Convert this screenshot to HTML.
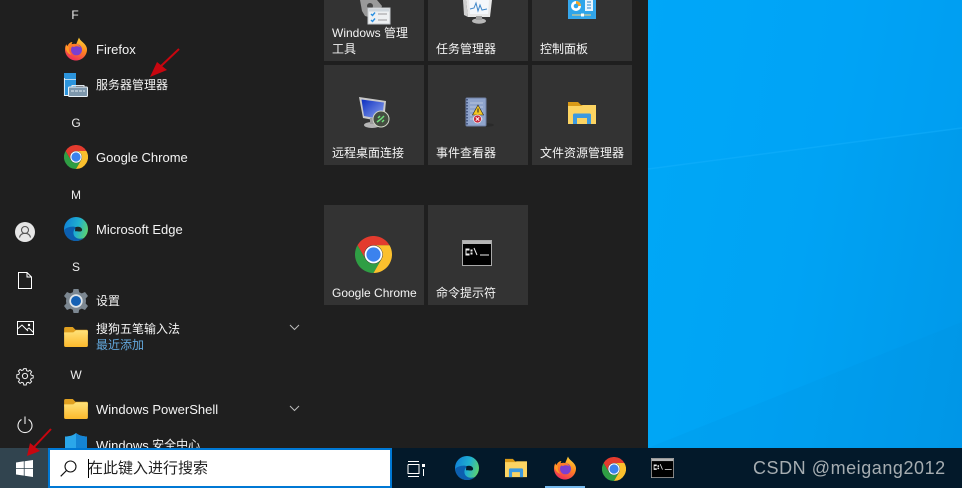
<!DOCTYPE html>
<html lang="zh-CN"><head><meta charset="utf-8"><title>Start</title>
<style>
html,body{margin:0;padding:0;background:#000}
#r{position:relative;width:962px;height:488px;overflow:hidden;background:#1f1f1f;font-family:"Liberation Sans","Noto Sans CJK SC",sans-serif;color:#f4f4f4}
.t{position:absolute;white-space:nowrap;font-size:12px;line-height:16px}
.t.e{font-size:13px}
.s{font-size:13px;position:relative;top:1px}
.l{position:absolute;width:20px;text-align:center;left:66px;font-size:12px;line-height:16px;color:#eee}
.tile{position:absolute;width:100px;height:100px;background:#333}
svg{position:absolute;overflow:visible}
#desk{position:absolute;left:648px;top:0;width:314px;height:448px;background:linear-gradient(100deg,#00a8f6 0%,#00a3f4 50%,#0098e9 100%)}
#tb{position:absolute;left:0;top:448px;width:962px;height:40px;background:#03192a}
</style></head><body><div id="r">
<svg width="0" height="0" style="position:absolute"><defs>
<linearGradient id="fo" x1="0.7" y1="0" x2="0.3" y2="1"><stop offset="0" stop-color="#ffd43a"/><stop offset=".45" stop-color="#ff8a1f"/><stop offset="1" stop-color="#f0285e"/></linearGradient>
<linearGradient id="eg" x1="0" y1="0.3" x2="1" y2="0.6"><stop offset="0" stop-color="#1083d8"/><stop offset=".55" stop-color="#20b0d0"/><stop offset="1" stop-color="#5ed36c"/></linearGradient>
<linearGradient id="fd" x1="0" y1="0" x2="0" y2="1"><stop offset="0" stop-color="#ffe27a"/><stop offset="1" stop-color="#fcb92c"/></linearGradient>
<linearGradient id="mon" x1="0" y1="0" x2="1" y2="1"><stop offset="0" stop-color="#0c2fc0"/><stop offset="1" stop-color="#93a8f0"/></linearGradient>
<symbol id="chrome" viewBox="0 0 48 48">
<path fill="#e33b2e" d="M3.2 12A24 24 0 0 1 44.8 12L24 12A12 12 0 0 0 13.6 30Z"/>
<path fill="#2f9e44" d="M3.2 12A24 24 0 0 0 24 48L34.4 30A12 12 0 0 1 13.6 30Z"/>
<path fill="#fbc02d" d="M44.8 12A24 24 0 0 1 24 48L34.4 30A12 12 0 0 0 24 12Z"/>
<circle cx="24" cy="24" r="11.5" fill="#fff"/><circle cx="24" cy="24" r="9.2" fill="#3b82ee"/></symbol>
<symbol id="firefox" viewBox="0 0 24 24">
<path fill="url(#fo)" d="M15 .5c.6 2 2 3 3.500 4.500 3 2.500 4.500 5 4.500 7.500 0 6-5 11-11 11S1 18.500 1 12.500c0-2 .5-4 1.300-5.300.3 1 .8 1.500 1.200 1.800C4.500 6.500 6.500 5 8.500 5c-.6 1-1 1.700-.8 2.500 1.500-.7 3-.7 4.500-.3C13 5 14 3 15 .5z"/>
<path fill="#ff9a24" d="M1.500 9c1 0 2.500.2 3.500 1.500-.5 2 0 5 2.500 7-3 0-6-3.500-6-8.500z"/>
<circle cx="12.500" cy="12.800" r="5.500" fill="#7b3fd0"/>
<path fill="#ff7a2a" d="M5 8.500c2-1.500 4.500-2 7-1.500 2.500.5 4 2 4.500 3.500-2-1.500-4.500-1.500-6.500-.5C8 9.500 6.500 9 5 8.500z"/></symbol>
<symbol id="edge" viewBox="0 0 24 24">
<circle cx="12" cy="12" r="12" fill="url(#eg)"/>
<path fill="#0c5fb0" d="M.3 13c.3 6 5 11 11.700 11 3 0 5.500-1 7.500-3-4 1.500-8 .5-9.500-2.500C8.500 15 10 11.500 13 10.500c-5-2-11 0-12.700 2.500z"/>
<path fill="#1f1f1f" d="M11.500 10.200c2-.8 5.500-.5 6.500 2 .5 1.300-.5 2.300-2 2.300-2 0-3.500-.5-5-.2.300-1.500 0-3 .5-4.100z" opacity=".95"/></symbol>
<symbol id="edget" viewBox="0 0 24 24">
<circle cx="12" cy="12" r="12" fill="url(#eg)"/>
<path fill="#0c5fb0" d="M.3 13c.3 6 5 11 11.700 11 3 0 5.500-1 7.500-3-4 1.500-8 .5-9.500-2.500C8.500 15 10 11.500 13 10.500c-5-2-11 0-12.700 2.500z"/>
<path fill="#03192a" d="M11.500 10.200c2-.8 5.500-.5 6.500 2 .5 1.300-.5 2.300-2 2.300-2 0-3.500-.5-5-.2.300-1.500 0-3 .5-4.100z"/></symbol>
<symbol id="folder" viewBox="1 1 22 18.500">
<path fill="#e0a020" d="M1 2.500Q1 1 2.500 1H9l2.500 2.500H22Q23 3.500 23 5V8H1Z"/>
<path fill="url(#fd)" d="M1 6H9.500L12 4H22Q23 4 23 5.500V18Q23 19.500 21.500 19.500H2.500Q1 19.500 1 18Z"/></symbol>
<symbol id="explorer" viewBox="0 0 28 24">
<path fill="#d99a17" d="M0 1H10L13 4H28V8H0Z"/><path fill="#fcd462" d="M0 5H13L15 4H28V23H0Z"/>
<path fill="#3c9ae0" d="M5 23V14Q5 12.500 6.500 12.500H21.500Q23 12.500 23 14V23H19V17H9V23Z"/></symbol>
<symbol id="cmd" viewBox="0 0 30 26">
<rect x=".5" y=".5" width="29" height="25" fill="#000" stroke="#a9a9a9"/><rect x="1" y="1" width="28" height="3" fill="#b5b5b5"/>
<path d="M4 9h3v1H4v4h3v1H4zM9 10h1v1H9zM9 13h1v1H9zM12 8l3 7M18 15h9" stroke="#eee" stroke-width="1" fill="none"/></symbol>
</defs></svg>

<div id="desk">
<svg style="left:0;top:0" width="314" height="448" viewBox="0 0 314 448">
<path fill="#00a7fb" d="M0 0H314V128L0 169Z" opacity=".3"/>
<path d="M0 169L314 128" stroke="#18b4ff" stroke-opacity=".4" stroke-width="1.500"/>
<path fill="#0090e0" d="M0 448L314 322V448Z" opacity=".18"/>
</svg></div>

<div class="tile" style="left:324px;top:-39px"></div>
<div class="tile" style="left:428px;top:-39px"></div>
<div class="tile" style="left:532px;top:-39px"></div>
<div class="tile" style="left:324px;top:65px"></div>
<div class="tile" style="left:428px;top:65px"></div>
<div class="tile" style="left:532px;top:65px"></div>
<div class="tile" style="left:324px;top:205px"></div>
<div class="tile" style="left:428px;top:205px"></div>

<!-- tile icons -->
<svg style="left:358px;top:0" width="34" height="26" viewBox="0 0 34 26">
<path fill="#9a9a9a" d="M2 0H19L24 6 22 12 14 18 7 16 4 11Z"/><circle cx="12" cy="6" r="3" fill="#444"/>
<rect x="10" y="8" width="22" height="16" fill="#eef0f2" stroke="#c4c8cc"/><rect x="11" y="9" width="20" height="2.500" fill="#cfd6dc"/>
<path d="M13 14l1.500 1.500 2.500-3M13 20l1.500 1.500 2.500-3" stroke="#2a8fe0" stroke-width="1.400" fill="none"/><path d="M20 14h9M20 20h9" stroke="#999"/></svg>
<svg style="left:462px;top:0" width="32" height="24" viewBox="0 0 32 24">
<path fill="#cfcfcf" d="M1 0H4L6 17 2 15Z"/><path fill="#e8e8e8" d="M4 0H30L28 17H6Z"/><path fill="#f4f7fb" d="M7 0H27L26 14H8Z"/>
<path d="M8 9l4-1 2-5 2 8 2-6 2 5 5-1" stroke="#3f86c8" stroke-width="1" fill="none"/>
<ellipse cx="17" cy="21" rx="7" ry="2.700" fill="#b8b8b8"/><rect x="14" y="16" width="6" height="4" fill="#a0a0a0"/></svg>
<svg style="left:568px;top:0" width="28" height="19" viewBox="0 0 28 19">
<rect width="28" height="19" fill="#37a7ec"/><rect x="1.500" y="0" width="25" height="17.500" fill="#2fa5ea"/>
<circle cx="8" cy="6" r="5" fill="#fff"/><path d="M8 6V1A5 5 0 0 1 13 6Z" fill="#f5a623"/><circle cx="8" cy="6" r="2.300" fill="#2fa5ea"/>
<rect x="17" y="0" width="8" height="11" fill="#e8f5ff"/><path d="M19 2h4M19 5h4M19 8h4" stroke="#2a85c8"/><path d="M4 15H23" stroke="#ffd27a"/><rect x="13" y="13.500" width="3" height="3" fill="#fff"/></svg>

<svg style="left:358px;top:97px" width="34" height="32" viewBox="0 0 34 32">
<path fill="#c9c9c9" d="M1 0L28 4 26 25 5 21Z"/><path fill="url(#mon)" d="M3.500 2.500L26 5.500 24 22.500 6 19Z"/>
<ellipse cx="14" cy="28" rx="8" ry="3" fill="#b5b5b5"/><rect x="12" y="21" width="6" height="6" fill="#9c9c9c"/>
<circle cx="23" cy="22" r="8" fill="#444d40" stroke="#cfd4c6"/><path d="M19 25l4-3M26 19l-3 3M20 21l2-2M24 25l2-2" stroke="#6ee27a" stroke-width="1.500"/></svg>
<svg style="left:465px;top:98px" width="30" height="30" viewBox="0 0 30 30">
<ellipse cx="18" cy="27" rx="11" ry="2" fill="#2a2a2a"/>
<rect x="1" y="0" width="20" height="28" rx="1" fill="#8fa4cc" stroke="#6f7fa3"/><path d="M2 1v26" stroke="#4a5d88" stroke-width="2" stroke-dasharray="1.500 1.500"/>
<path d="M5 5h13M5 9h13M5 13h13M5 17h13M5 21h13" stroke="#b9c6de"/>
<path d="M13 7L18.500 17H7.500Z" fill="#f4c721" stroke="#222" stroke-width=".6"/><rect x="12.500" y="10.500" width="1" height="4" fill="#222"/>
<circle cx="12.500" cy="21" r="4" fill="#c8283c" stroke="#eee" stroke-width=".7"/><path d="M10.800 19.300l3.400 3.400M14.200 19.300l-3.400 3.400" stroke="#fff"/></svg>
<svg style="left:568px;top:101px" width="28" height="24"><use href="#explorer" width="28" height="24"/></svg>

<svg style="left:355px;top:236px" width="37" height="37"><use href="#chrome" width="37" height="37"/></svg>
<svg style="left:462px;top:240px" width="30" height="26"><use href="#cmd" width="30" height="26"/></svg>

<div class="t" style="left:332px;top:25px">Windows 管理</div>
<div class="t" style="left:332px;top:41px">工具</div>
<div class="t" style="left:436px;top:41px">任务管理器</div>
<div class="t" style="left:540px;top:41px">控制面板</div>
<div class="t" style="left:332px;top:145px">远程桌面连接</div>
<div class="t" style="left:436px;top:145px">事件查看器</div>
<div class="t" style="left:540px;top:145px">文件资源管理器</div>
<div class="t" style="left:332px;top:285px">Google Chrome</div>
<div class="t" style="left:436px;top:285px">命令提示符</div>

<!-- list -->
<div class="l" style="top:7px;left:65px">F</div>
<div class="l" style="top:115px">G</div>
<div class="l" style="top:187px">M</div>
<div class="l" style="top:259px">S</div>
<div class="l" style="top:367px">W</div>

<svg style="left:64px;top:37px" width="24" height="24"><use href="#firefox" width="24" height="24"/></svg>
<svg style="left:64px;top:73px" width="24" height="24" viewBox="0 0 24 24">
<rect x="0" y="0" width="12" height="23" fill="#2c94dc"/><path d="M0 6.500H12" stroke="#dcecf8" stroke-width=".8"/><path d="M.4 5V22.500H5" stroke="#eef6fc" stroke-width=".9" fill="none"/>
<rect x="4.500" y="14" width="19" height="9.500" rx="1" fill="#7d97ac" stroke="#eaf2f8"/><path d="M8 14v-1.500h12V14" stroke="#dfe8ee" fill="none"/><path d="M7 18H21" stroke="#e4edf3" stroke-dasharray="3 1"/></svg>
<svg style="left:64px;top:145px" width="24" height="24"><use href="#chrome" width="24" height="24"/></svg>
<svg style="left:64px;top:217px" width="24" height="25"><use href="#edge" width="24" height="24"/></svg>
<svg style="left:64px;top:289px" width="24" height="24" viewBox="0 0 24 24">
<path fill="#7c8791" d="M9.500 0h5l.7 3.300 2.600 1.100L21 3l3 4-2.300 2.500.3 2.500-.3 2.500L24 17l-3 4-3.200-1.400-2.600 1.100-.7 3.300h-5l-.7-3.300-2.600-1.100L3 21l-3-4 2.300-2.500L2 12l.3-2.500L0 7l3-4 3.200 1.400 2.600-1.100z"/>
<circle cx="12" cy="12" r="6.700" fill="#dfe5ea"/><circle cx="12" cy="12" r="5" fill="#1460b4"/></svg>
<svg style="left:64px;top:327px" width="24" height="20"><use href="#folder" width="24" height="20"/></svg>
<svg style="left:64px;top:399px" width="24" height="20"><use href="#folder" width="24" height="20"/></svg>
<svg style="left:64px;top:432px" width="24" height="24" viewBox="0 0 24 24"><path fill="#2ba7ea" d="M12 1C9 3.500 5 4.500 1 4.500V16h22V4.500C19 4.500 15 3.500 12 1Z"/><path fill="#1584d4" d="M12 1C15 3.500 19 4.500 23 4.500V16H12Z"/></svg>

<div class="t e" style="left:96px;top:42px">Firefox</div>
<div class="t" style="left:96px;top:77px">服务器管理器</div>
<div class="t e" style="left:96px;top:150px">Google Chrome</div>
<div class="t e" style="left:96px;top:222px">Microsoft Edge</div>
<div class="t" style="left:96px;top:293px">设置</div>
<div class="t" style="left:96px;top:321px">搜狗五笔输入法</div>
<div class="t" style="left:96px;top:337px;color:#63a8dd">最近添加</div>
<div class="t e" style="left:96px;top:402px">Windows PowerShell</div>
<div class="t" style="left:96px;top:437px"><span class="s">Windows</span> 安全中心</div>
<svg style="left:289px;top:324px" width="11" height="7"><path d="M1 1l4.500 4.500L10 1" stroke="#bbb" fill="none"/></svg>
<svg style="left:289px;top:405px" width="11" height="7"><path d="M1 1l4.500 4.500L10 1" stroke="#bbb" fill="none"/></svg>

<!-- rail -->
<svg style="left:15px;top:222px" width="20" height="20" viewBox="0 0 20 20"><circle cx="10" cy="10" r="10" fill="#e6e6e6"/><circle cx="10" cy="8" r="3.500" fill="none" stroke="#555" stroke-width="1.100"/><path d="M4.500 15.500c.6-3 2.800-4.200 5.500-4.200s4.900 1.200 5.500 4.200" fill="none" stroke="#555" stroke-width="1.100"/></svg>
<svg style="left:18px;top:272px" width="14" height="17" viewBox="0 0 14 17"><path d="M.5.500H9L13.500 5V16.500H.5ZM9 .5V5H13.500" fill="none" stroke="#fff"/></svg>
<svg style="left:17px;top:321px" width="17" height="14" viewBox="0 0 17 14"><rect x=".5" y=".5" width="16" height="13" fill="none" stroke="#fff"/><path d="M.5 8L5 4l6 6M10 8.500l2-1.500 4.500 4.500" fill="none" stroke="#fff"/><circle cx="12" cy="4" r="1.200" fill="#fff"/></svg>
<svg style="left:17px;top:368px" width="16" height="16" viewBox="0 0 16 16"><path d="M6.800.6h2.400l.4 2 1.600.7 1.700-1.100 1.700 1.700-1.100 1.700.7 1.600 2 .4v2.400l-2 .4-.7 1.600 1.100 1.700-1.700 1.700-1.700-1.100-1.600.7-.4 2H6.800l-.4-2-1.600-.7-1.700 1.100-1.700-1.700 1.100-1.700-.7-1.600-2-.4V6.800l2-.4.7-1.600-1.100-1.700 1.700-1.700 1.700 1.100 1.600-.7z" fill="none" stroke="#eee"/><circle cx="8" cy="8" r="2.600" fill="none" stroke="#eee"/></svg>
<svg style="left:17px;top:416px" width="16" height="17" viewBox="0 0 16 17"><path d="M4.500 3.500a7 7 0 1 0 7 0M8 .5V8" fill="none" stroke="#eee" stroke-width="1.100"/></svg>

<!-- taskbar -->
<div id="tb">
<div style="position:absolute;left:0;top:0;width:48px;height:40px;background:#31444f"></div>
<svg style="left:16px;top:12px" width="17" height="17" viewBox="0 0 17 17"><path fill="#fff" d="M0 2.500L7.800 1.300V8H0ZM8.600 1.200L17 0V8H8.600ZM0 8.800H7.800V15.600L0 14.500ZM8.600 8.800H17V17L8.600 15.800Z"/></svg>
<div style="position:absolute;left:48px;top:0;width:340px;height:36px;border:2px solid #0078d4;background:#fff"></div>
<svg style="left:60px;top:12px" width="17" height="17" viewBox="0 0 17 17"><circle cx="10.500" cy="6.500" r="5.500" fill="none" stroke="#111" stroke-width="1.100"/><path d="M6.500 10.500L.7 16.300" stroke="#111" stroke-width="1.200"/></svg>
<div style="position:absolute;left:88px;top:11px;width:1px;height:19px;background:#000"></div>
<div class="t" style="left:88px;top:11px;font-size:15px;line-height:19px;color:#222">在此键入进行搜索</div>
<svg style="left:408px;top:13px" width="17" height="16" viewBox="0 0 17 16" stroke="#fff" fill="none"><path d="M0 .5H11M0 15.500H11M0 3.500V12.500H11V3.500H0M15.500 8V15"/><rect x="14" y="3" width="3" height="3" fill="#fff" stroke="none"/></svg>
<svg style="left:455px;top:8px" width="24" height="24"><use href="#edget" width="24" height="24"/></svg>
<svg style="left:505px;top:10px" width="22" height="20" viewBox="0 0 28 24" preserveAspectRatio="none"><use href="#explorer" width="28" height="24"/></svg>
<svg style="left:553px;top:8px" width="24" height="24"><use href="#firefox" width="24" height="24"/></svg>
<svg style="left:602px;top:9px" width="24" height="24"><use href="#chrome" width="24" height="24"/></svg>
<svg style="left:651px;top:10px" width="23" height="20" viewBox="0 0 30 26" preserveAspectRatio="none"><use href="#cmd" width="30" height="26"/></svg>
<div style="position:absolute;left:545px;top:38px;width:40px;height:2px;background:#76b9ed"></div>
<div class="t" style="left:753px;top:9px;font-size:18px;line-height:22px;color:#a6adb1;letter-spacing:.55px">CSDN @meigang2012</div>
</div>

<!-- arrows -->
<svg style="left:0;top:0" width="962" height="488">
<path d="M179 49L160 67" stroke="#c8060f" stroke-width="2"/><path fill="#c8060f" d="M150 77L157 62 167 70Z"/>
<path d="M51 429L34 447" stroke="#c8060f" stroke-width="2"/><path fill="#c8060f" d="M27 456L30 443 40 451Z"/>
</svg>
</div></body></html>
